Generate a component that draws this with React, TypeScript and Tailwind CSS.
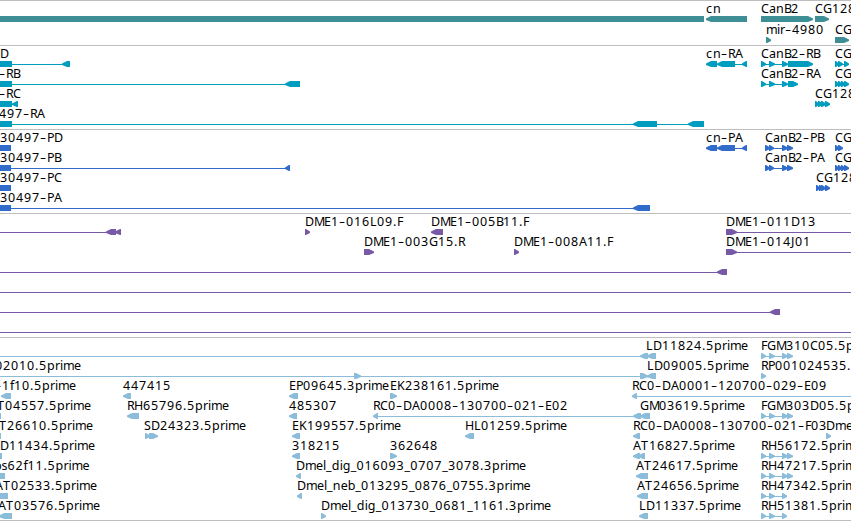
type Shape = { kind: 'left' | 'right' | 'box' | 'line'; from: number; to: number }
type Label = { x: number; text: string }
type Row = { labels?: Label[]; shapes: Shape[] }
type Track = { id: string; color: string; rowClass: string; className: string; rows: Row[] }

const left = (from: number, to: number): Shape => ({ kind: 'left', from, to })
const right = (from: number, to: number): Shape => ({ kind: 'right', from, to })
const box = (from: number, to: number): Shape => ({ kind: 'box', from, to })
const line = (from: number, to: number): Shape => ({ kind: 'line', from, to })
const label = (x: number, text: string): Label => ({ x, text })

// glyph advances in pixels, digits are all 8
const ADVANCE: Record<string, number> = {
  '-': 7, '.': 4, _: 5.75,
  A: 8, B: 7, C: 8, D: 9, E: 7, F: 6, G: 9, H: 9, J: 4, K: 8, L: 7, M: 10, P: 7, R: 7, S: 7, T: 8,
  a: 7, b: 7.5, c: 7, d: 8, e: 7, f: 4, g: 8, i: 3, l: 3, m: 11, n: 8, p: 8, r: 5, s: 6,
}

// splits a name at its hyphens, which are set larger than the rest
const layoutRuns = (x: number, text: string) => {
  let pen = x
  return text.split(/(-)/).filter(Boolean).map((run) => ({
    run,
    positions: run.split('').map((ch) => {
      const at = pen
      pen += ADVANCE[ch] ?? 8
      return at
    }),
  }))
}

const cnExons = [line(706, 747), left(706, 717), left(717, 735), left(742, 747)]
const fourExons = [line(761, 793), right(761, 766), right(769, 775), right(782, 788), right(787, 793)]
const threeExons = [line(761, 787), right(761, 766), right(769, 775), right(782, 787)]
const canB2Protein = [line(765, 793), right(765, 770), right(769, 774), right(782, 788), right(787, 793)]

const tracks: Track[] = [
  {
    id: 'genes',
    color: '#3d8e95',
    rowClass: 'h-[21px]',
    className: 'pt-0.5',
    rows: [
      {
        labels: [label(706, 'cn'), label(761, 'CanB2'), label(815, 'CG12844')],
        shapes: [box(-5, 704), left(706, 747), right(761, 813), right(815, 829)],
      },
      {
        labels: [label(766, 'mir-4980'), label(835, 'CG12843')],
        shapes: [right(766, 771), right(835, 849)],
      },
    ],
  },
  {
    id: 'transcripts',
    color: '#009dbf',
    rowClass: 'h-5',
    className: 'pt-0.5 pb-px',
    rows: [
      {
        labels: [label(0, 'D'), label(706, 'cn-RA'), label(761, 'CanB2-RB'), label(835, 'CG12843')],
        shapes: [
          box(-5, 12), line(12, 63), left(62, 70), ...cnExons,
          line(761, 788), right(761, 766), right(769, 775), right(782, 788), right(788, 813),
          line(835, 849), right(835, 839), right(838, 843), right(844, 849),
        ],
      },
      {
        labels: [label(-1, '-RB'), label(761, 'CanB2-RA'), label(835, 'CG12843')],
        shapes: [
          box(-5, 12), line(12, 286), left(285, 300),
          line(761, 788), right(761, 766), right(769, 775), right(782, 788), right(788, 798),
          right(835, 839), right(838, 842), right(841, 845), right(844, 849),
        ],
      },
      {
        labels: [label(-1, '-RC'), label(815, 'CG12844')],
        shapes: [box(-5, 12), left(12, 18), right(815, 819), right(818, 823), right(821, 826), right(825, 830)],
      },
      {
        labels: [label(-1, '497-RA')],
        shapes: [box(-5, 12), line(12, 700), left(633, 657), left(688, 704)],
      },
    ],
  },
  {
    id: 'proteins',
    color: '#316ccb',
    rowClass: 'h-5',
    className: 'pt-0.5 pb-px',
    rows: [
      {
        labels: [label(0, '30497-PD'), label(706, 'cn-PA'), label(765, 'CanB2-PB'), label(835, 'CG12843')],
        shapes: [box(-5, 11), ...cnExons, ...canB2Protein, right(835, 839), right(838, 843)],
      },
      {
        labels: [label(0, '30497-PB'), label(765, 'CanB2-PA'), label(835, 'CG12843')],
        shapes: [
          box(-5, 11), line(11, 287), left(285, 290), ...canB2Protein,
          right(835, 839), right(838, 842), right(841, 845), right(844, 849),
        ],
      },
      {
        labels: [label(0, '30497-PC'), label(816, 'CG12844')],
        shapes: [box(-5, 11), right(816, 820), right(819, 823), right(821, 826), right(825, 830)],
      },
      {
        labels: [label(0, '30497-PA')],
        shapes: [box(-5, 11), line(11, 636), left(633, 650)],
      },
    ],
  },
  {
    id: 'bac-ends',
    color: '#7759a6',
    rowClass: 'h-5',
    className: 'pt-0.5 pb-px',
    rows: [
      {
        labels: [label(305, 'DME1-016L09.F'), label(431, 'DME1-005B11.F'), label(726, 'DME1-011D13')],
        shapes: [line(0, 108), left(106, 116), left(115, 121), right(305, 310), left(431, 443), line(726, 851), right(726, 737)],
      },
      {
        labels: [label(364, 'DME1-003G15.R'), label(514, 'DME1-008A11.F'), label(726, 'DME1-014J01')],
        shapes: [right(364, 374), right(514, 519), line(726, 851), right(726, 737)],
      },
      { shapes: [line(0, 720), left(717, 727)] },
      { shapes: [line(0, 851)] },
      { shapes: [line(0, 773), left(770, 780)] },
      { shapes: [line(0, 851)] },
    ],
  },
  {
    id: 'ests',
    color: '#8bbddb',
    rowClass: 'h-5',
    className: 'pt-0.5 border-b',
    rows: [
      {
        labels: [label(646, 'LD11824.5prime'), label(761, 'FGM310C05.5prime')],
        shapes: [line(0, 642), left(640, 648), left(647, 656), ...fourExons],
      },
      {
        labels: [label(-5, '02010.5prime'), label(647, 'LD09005.5prime'), label(761, 'RP001024535.5prime')],
        shapes: [line(0, 650), right(354, 361), right(640, 648), left(647, 656), right(761, 766)],
      },
      {
        labels: [
          label(-5, '-1f10.5prime'), label(123, '447415'), label(289, 'EP09645.3prime'),
          label(390, 'EK238161.5prime'), label(632, 'RC0-DA0001-120700-029-E09'),
        ],
        shapes: [left(1, 11), left(123, 131), left(289, 298), right(390, 397), line(633, 851), left(632, 637)],
      },
      {
        labels: [
          label(-3, 'T04557.5prime'), label(127, 'RH65796.5prime'), label(289, '485307'),
          label(373, 'RC0-DA0008-130700-021-E02'), label(640, 'GM03619.5prime'), label(761, 'FGM303D05.5prime'),
        ],
        shapes: [box(-5, 1), left(127, 139), left(289, 297), line(375, 636), left(373, 378), left(633, 641), left(640, 650), ...fourExons],
      },
      {
        labels: [
          label(-1, 'T26610.5prime'), label(144, 'SD24323.5prime'), label(292, 'EK199557.5prime'),
          label(465, 'HL01259.5prime'), label(633, 'RC0-DA0008-130700-021-F03'), label(826, 'Dmel'),
        ],
        shapes: [box(-5, 1), right(145, 150), right(149, 158), left(292, 300), left(465, 474), left(633, 640), right(826, 831)],
      },
      {
        labels: [
          label(0, 'D11434.5prime'), label(292, '318215'), label(390, '362648'),
          label(633, 'AT16827.5prime'), label(761, 'RH56172.5prime'),
        ],
        shapes: [box(-5, 2), left(292, 300), right(390, 397), left(633, 640), left(638, 645), ...fourExons],
      },
      {
        labels: [
          label(-6, 'bs62f11.5prime'), label(296, 'Dmel_dig_016093_0707_3078.3prime'),
          label(636, 'AT24617.5prime'), label(761, 'RH47217.5prime'),
        ],
        shapes: [box(-5, 5), left(296, 301), left(636, 648), ...fourExons],
      },
      {
        labels: [
          label(-5, 'AT02533.5prime'), label(297, 'Dmel_neb_013295_0876_0755.3prime'),
          label(637, 'AT24656.5prime'), label(761, 'RH47342.5prime'),
        ],
        shapes: [box(-5, 8), left(297, 302), left(637, 648), ...threeExons],
      },
      {
        labels: [
          label(-2, 'AT03576.5prime'), label(321, 'Dmel_dig_013730_0681_1161.3prime'),
          label(639, 'LD11337.5prime'), label(761, 'RH51381.5prime'),
        ],
        shapes: [left(-1, 12), right(321, 326), left(639, 648), ...threeExons],
      },
    ],
  },
]

function Glyph({ kind, from, to }: Shape) {
  if (kind === 'line') return <rect x={from} y={16} width={to - from} height={1} />
  if (kind === 'box') return <rect x={from} y={13} width={to - from} height={6} />

  const head = Math.min(6, to - from)
  const points =
    kind === 'left'
      ? `${from},15.5 ${from + head - 1},13 ${to},13 ${to},19 ${from + head - 1},19 ${from},17`
      : `${to},15.5 ${to - head + 1},13 ${from},13 ${from},19 ${to - head + 1},19 ${to},17`
  return <polygon points={points} />
}

function FeatureLabel({ x, text }: Label) {
  return (
    <text y={10} className="fill-black">
      {layoutRuns(x, text).map(({ run, positions }, i) => (
        <tspan
          key={i}
          x={positions.join(' ')}
          y={run === '-' ? 11 : 10}
          className={run === '-' ? 'text-[19px] font-light' : undefined}
        >
          {run}
        </tspan>
      ))}
    </text>
  )
}

function FeatureRow({ row, color, className }: { row: Row; color: string; className: string }) {
  return (
    <svg className={`block w-full overflow-visible ${className}`}>
      <g fill={color}>
        {row.shapes.map((shape, i) => (
          <Glyph key={i} {...shape} />
        ))}
      </g>
      {row.labels?.map((item) => (
        <FeatureLabel key={item.x} {...item} />
      ))}
    </svg>
  )
}

export default function App() {
  return (
    <main className="h-[521px] w-[851px] overflow-hidden bg-white font-['Noto_Sans',sans-serif] text-[12.5px]">
      {tracks.map((track) => (
        <section key={track.id} className={`border-t border-[#bebebe] ${track.className}`}>
          {track.rows.map((row, i) => (
            <FeatureRow key={i} row={row} color={track.color} className={track.rowClass} />
          ))}
        </section>
      ))}
    </main>
  )
}
